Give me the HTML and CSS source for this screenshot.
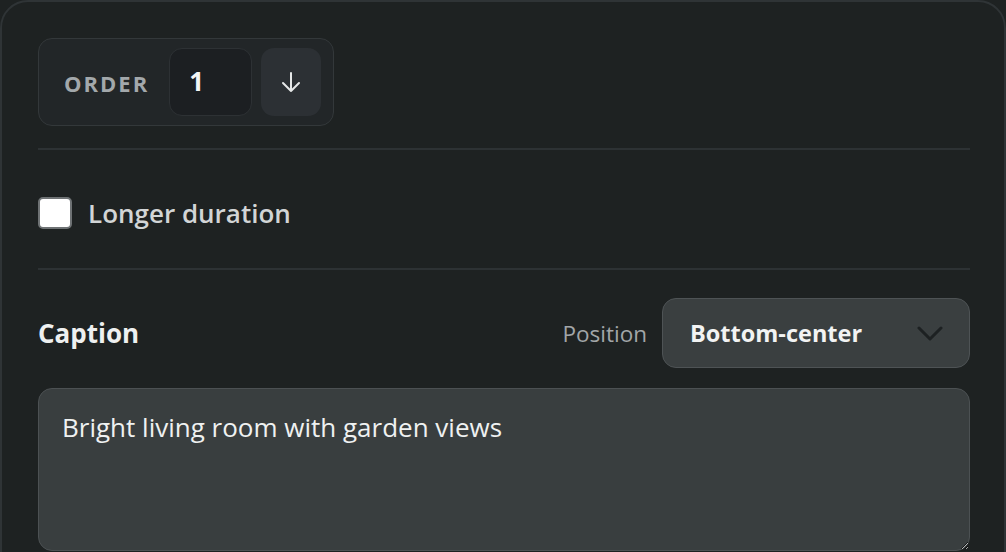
FILE: index.html
```html
<!DOCTYPE html>
<html lang="en">
<head>
<meta charset="utf-8">
<title>Slide settings</title>
<link rel="stylesheet" href="styles.css">
</head>
<body>
<div class="card">
  <div class="order-group">
    <span class="order-label">ORDER</span>
    <input class="order-input" type="text" value="1" aria-label="Order">
    <button class="order-btn" type="button" aria-label="Move down">
      <svg width="22" height="22" viewBox="0 0 22 22" fill="none" stroke="#e6e8e8" stroke-width="2" stroke-linecap="round" stroke-linejoin="round"><path d="M11 2v18M3 12l8 8 8-8"/></svg>
    </button>
  </div>
  <div class="divider"></div>
  <label class="check-row">
    <span class="checkbox"></span>
    <span class="check-label">Longer duration</span>
  </label>
  <div class="divider"></div>
  <div class="caption-row">
    <span class="caption-title">Caption</span>
    <div class="position">
      <span class="position-label">Position</span>
      <div class="select">
        <span class="select-value">Bottom-center</span>
        <svg width="28" height="16" viewBox="0 0 28 16" fill="none" stroke="#1d2122" stroke-width="3" stroke-linecap="round" stroke-linejoin="round"><path d="M3 3l11 11 11-11"/></svg>
      </div>
    </div>
  </div>
  <textarea class="caption-text">Bright living room with garden views</textarea>
</div>
</body>
</html>
```
FILE: styles.css
```css
html, body {
  margin: 0;
  padding: 0;
  background: #1e2222;
  overflow: hidden;
}
body {
  font-family: "Open Sans", "Liberation Sans", sans-serif;
  width: 1006px;
  height: 552px;
}
.card {
  box-sizing: border-box;
  width: 1006px;
  min-height: 620px;
  background: #1e2222;
  border: 2px solid #2f3436;
  border-radius: 28px;
  padding: 36px 34px 0 36px;
}
.order-group {
  display: inline-flex;
  align-items: center;
  box-sizing: border-box;
  height: 88px;
  padding: 0 12px 0 25px;
  background: #222628;
  border: 1px solid #33383a;
  border-radius: 14px;
}
.order-label {
  font-size: 22px;
  font-weight: 700;
  letter-spacing: 2px;
  color: #a3a8ab;
  margin-right: 20px;
  line-height: 1;
  padding-top: 2px;
}
.order-input {
  box-sizing: border-box;
  width: 83px;
  height: 68px;
  background: #1c1f22;
  border: 1px solid #2d3134;
  border-radius: 13px;
  color: #f4f5f5;
  font-family: inherit;
  font-size: 26px;
  font-weight: 700;
  padding: 0 0 2px 19px;
  outline: none;
}
.order-btn {
  display: flex;
  align-items: center;
  justify-content: center;
  width: 60px;
  height: 68px;
  margin-left: 9px;
  background: #2c3034;
  border: none;
  border-radius: 13px;
  padding: 0;
}
.divider {
  height: 2px;
  background: #2d3234;
}
.order-group + .divider {
  margin-top: 22px;
}
.check-row {
  display: flex;
  align-items: center;
  height: 32px;
  padding: 47px 0 39px;
}
.checkbox {
  box-sizing: border-box;
  width: 34px;
  height: 32px;
  background: #ffffff;
  border: 2px solid #6e7274;
  border-radius: 5px;
}
.check-label {
  margin-left: 16px;
  font-size: 26px;
  line-height: 32px;
  font-weight: 600;
  color: #d2d5d6;
}
.caption-row {
  display: flex;
  align-items: center;
  justify-content: space-between;
  margin-top: 28px;
}
.caption-title {
  font-size: 26px;
  font-weight: 700;
  color: #eef0f0;
}
.position {
  display: flex;
  align-items: center;
}
.position-label {
  font-size: 22.5px;
  color: #a2a6a8;
  margin-right: 15px;
}
.select {
  box-sizing: border-box;
  display: flex;
  align-items: center;
  justify-content: space-between;
  width: 308px;
  height: 70px;
  padding: 0 25px 0 27px;
  background: #3a3f40;
  border: 1px solid #4e5355;
  border-radius: 14px;
}
.select-value {
  font-size: 23.5px;
  font-weight: 700;
  color: #f2f3f3;
}
.caption-text {
  display: block;
  box-sizing: border-box;
  width: 100%;
  height: 163px;
  margin-top: 20px;
  padding: 20px 23px;
  background: #393e3f;
  border: 1px solid #4c5153;
  border-radius: 14px;
  color: #eff1f1;
  font-family: inherit;
  font-size: 26px;
  line-height: 1.4;
  outline: none;
  resize: vertical;
}
```
